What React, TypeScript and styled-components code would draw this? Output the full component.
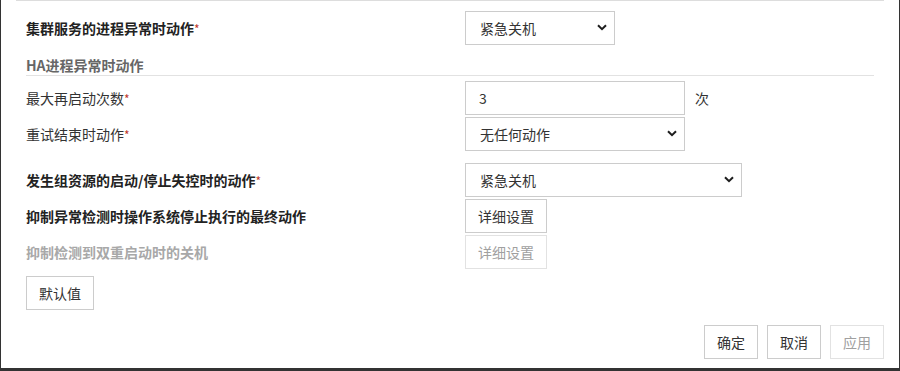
import React from 'react';
import styled, { createGlobalStyle } from 'styled-components';

const GlobalStyle = createGlobalStyle`
    html, body {
        margin: 0;
        padding: 0;
        background: #ffffff;
    }
    body {
        font-family: "Noto Sans CJK SC", "Noto Sans", sans-serif;
        font-size: 14px;
        color: #333333;
    }
`;

const Chevron = () => (
    <svg width='10' height='7' viewBox='0 0 10 7'>
        <polyline points='1,1.2 5,5.2 9,1.2' fill='none' stroke='#1e1e1e' strokeWidth='2' />
    </svg>
);

const Field = ({ label, required, bold, disabled, children }: {
    label: string;
    required?: boolean;
    bold?: boolean;
    disabled?: boolean;
    children: React.ReactNode;
}) => (
    <Row>
        <Label $bold={bold} $disabled={disabled}>
            {label}
            {required && <Star>*</Star>}
        </Label>
        <Control>{children}</Control>
    </Row>
);

const Dropdown = ({ value, width }: { value: string; width: number }) => (
    <SelectWrap $width={width}>
        <Select value={value} onChange={() => {}}>
            <option>{value}</option>
        </Select>
        <Arrow>
            <Chevron />
        </Arrow>
    </SelectWrap>
);

const App = () => (
    <>
        <GlobalStyle />
        <Frame>
            <TopRule />
            <Form>
                <Section>
                    <Field label='集群服务的进程异常时动作' required bold>
                        <Dropdown value='紧急关机' width={150} />
                    </Field>
                </Section>
                <Heading>HA进程异常时动作</Heading>
                <Section $top={5}>
                    <Field label='最大再启动次数' required>
                        <Input value='3' readOnly />
                        <Unit>次</Unit>
                    </Field>
                    <Field label='重试结束时动作' required>
                        <Dropdown value='无任何动作' width={220} />
                    </Field>
                </Section>
                <Section $top={12}>
                    <Field label='发生组资源的启动/停止失控时的动作' required bold>
                        <Dropdown value='紧急关机' width={277} />
                    </Field>
                    <Field label='抑制异常检测时操作系统停止执行的最终动作' bold>
                        <Button>详细设置</Button>
                    </Field>
                    <Field label='抑制检测到双重启动时的关机' bold disabled>
                        <Button disabled>详细设置</Button>
                    </Field>
                </Section>
                <DefaultRow>
                    <Button>默认值</Button>
                </DefaultRow>
            </Form>
            <Footer>
                <Button>确定</Button>
                <Button>取消</Button>
                <Button disabled>应用</Button>
            </Footer>
        </Frame>
    </>
);

const Frame = styled.div`
    width: 900px;
    height: 371px;
    box-sizing: border-box;
    padding: 0 15px;
    border-left: 1px solid #333333;
    border-right: 1px solid #333333;
    border-bottom: 3px solid #333333;
    display: flex;
    flex-direction: column;
    overflow: hidden;
`;

const TopRule = styled.div`
    height: 1px;
    background: #dddddd;
`;

const Form = styled.div`
    padding: 0 10px;
    display: flex;
    flex-direction: column;
`;

const Section = styled.div<{ $top?: number }>`
    margin-top: ${p => p.$top ?? 10}px;
    display: flex;
    flex-direction: column;
    gap: 2px;
`;

const Row = styled.div`
    display: grid;
    grid-template-columns: 439px 1fr;
    align-items: center;
    height: 34px;
`;

const Label = styled.div<{ $bold?: boolean; $disabled?: boolean }>`
    font-size: 14px;
    line-height: 20px;
    font-weight: ${p => (p.$bold ? 700 : 400)};
    color: ${p => (p.$disabled ? '#a8a8a8' : p.$bold ? '#222222' : '#333333')};
    white-space: nowrap;
`;

const Star = styled.span`
    color: #c0392b;
    font-weight: 400;
    font-size: 12px;
`;

const Control = styled.div`
    display: flex;
    align-items: center;
    height: 34px;
`;

const Heading = styled.div`
    margin-top: 10px;
    font-size: 14px;
    line-height: 20px;
    font-weight: 700;
    color: #666666;
    border-bottom: 1px solid #e2e2e2;
`;

const SelectWrap = styled.div<{ $width: number }>`
    position: relative;
    width: ${p => p.$width}px;
    height: 34px;
`;

const Select = styled.select`
    appearance: none;
    width: 100%;
    height: 34px;
    box-sizing: border-box;
    margin: 0;
    padding: 0 28px 0 14px;
    border: 1px solid #cccccc;
    border-radius: 0;
    background: #ffffff;
    font-family: "Noto Sans CJK SC", "Noto Sans", sans-serif;
    font-size: 14px;
    color: #333333;
    outline: none;
`;

const Arrow = styled.span`
    position: absolute;
    right: 8px;
    top: 13px;
    display: flex;
    pointer-events: none;
`;

const Input = styled.input`
    width: 220px;
    height: 34px;
    box-sizing: border-box;
    margin: 0;
    padding: 0 13px;
    border: 1px solid #cccccc;
    border-radius: 0;
    font-family: "Noto Sans CJK SC", "Noto Sans", sans-serif;
    font-size: 14px;
    color: #333333;
    outline: none;
`;

const Unit = styled.span`
    margin-left: 10px;
    font-size: 14px;
    color: #333333;
`;

const Button = styled.button`
    height: 34px;
    box-sizing: border-box;
    margin: 0;
    padding: 0 12px;
    border: 1px solid ${p => (p.disabled ? '#e2e2e2' : '#cccccc')};
    border-radius: 0;
    background: #ffffff;
    font-family: "Noto Sans CJK SC", "Noto Sans", sans-serif;
    font-size: 14px;
    color: ${p => (p.disabled ? '#a0a0a0' : '#333333')};
    cursor: ${p => (p.disabled ? 'default' : 'pointer')};
`;

const DefaultRow = styled.div`
    margin-top: 7px;
    display: flex;
`;

const Footer = styled.div`
    margin-top: 15px;
    display: flex;
    justify-content: flex-end;
    gap: 9px;
`;

export default App;
